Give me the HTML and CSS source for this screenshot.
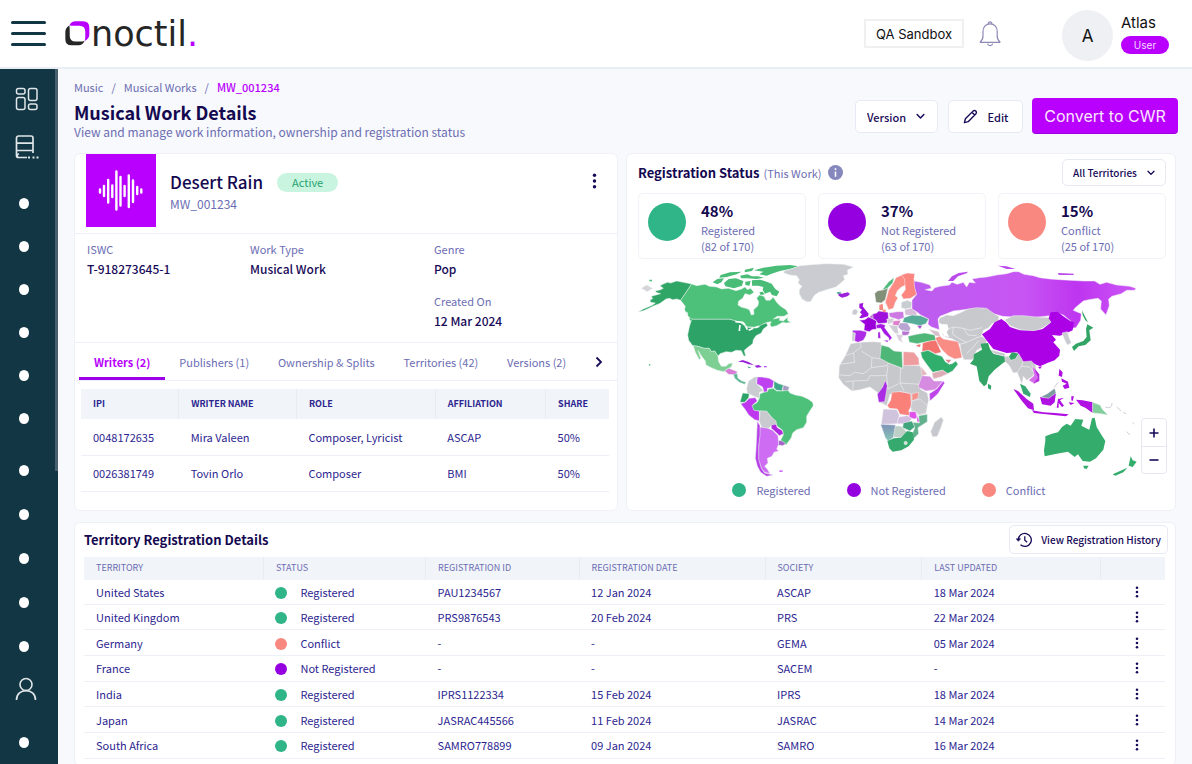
FILE: index.html
```html
<!DOCTYPE html>
<html lang="en">
<head>
<meta charset="utf-8">
<meta name="viewport" content="width=device-width, initial-scale=1">
<title>Musical Work Details</title>
<link rel="stylesheet" href="styles.css">
</head>
<body>
<svg width="0" height="0" class="sprite" aria-hidden="true">
  <symbol id="kebab" viewBox="0 0 4 14"><circle cx="2" cy="2" r="1.5"/><circle cx="2" cy="7" r="1.5"/><circle cx="2" cy="12" r="1.5"/></symbol>
  <symbol id="chev" viewBox="0 0 8 6"><path d="M1 1.2 4 4.4 7 1.2" fill="none" stroke="currentColor" stroke-width="1.3" stroke-linecap="round" stroke-linejoin="round"/></symbol>
</svg>
<header class="topbar">
  <button class="menu-btn" aria-label="Menu"><span></span><span></span><span></span></button>
  <a class="logo" href="#">
    <svg viewBox="195 62 74 74" width="25" height="25" aria-hidden="true">
      <path fill="#262626" d="M208 75 Q196 82 196 94 V116 Q196 134 214 134 H236 Q246 134 253 121 Q246 123 238 123 H226 Q209 123 209 106 V90 Q209 82 208 75Z"/>
      <path fill="#b900ff" d="M208 75 Q214 63 226 63 H248 Q267 63 267 82 V102 Q267 114 253 121 Q255 116 255 108 V94 Q255 76 238 76 H224 Q214 76 208 75Z"/>
    </svg>
    <span class="wordmark">noctil<span class="logo-dot">.</span></span>
  </a>
  <div class="top-right">
    <button class="sandbox">QA Sandbox</button>
    <button class="bell" aria-label="Notifications">
      <svg viewBox="0 0 22 26" width="22" height="26" fill="none" stroke="#8d89b5" stroke-width="1.2"><path d="M9.3 2.6a1.8 1.8 0 0 1 3.6 0M.8 21.4h20.6M1 21.2c2-1.600 3-3.200 3-6.200V10.500C4 6 7 2.800 11.100 2.800S18.200 6 18.200 10.500V15c0 3 1 4.600 3 6.200M8.500 22.600a2.700 2.700 0 0 0 5.200 0"/></svg>
    </button>
    <span class="avatar">A</span>
    <div class="who"><span class="who-name">Atlas</span><span class="who-role">User</span></div>
  </div>
</header>
<div class="shell">
  <nav class="side" aria-label="Main">
    <ul class="icons">
      <li><a href="#" aria-label="Dashboard"><svg viewBox="0 0 24 24" width="24" height="24" fill="none" stroke="#dfe5e8" stroke-width="1.500"><rect x="1.500" y="1.500" width="8.500" height="5.500" rx="2"/><rect x="13.500" y="1.500" width="8.500" height="12" rx="2"/><rect x="1.500" y="10.500" width="8.500" height="12" rx="2"/><rect x="13.500" y="17" width="8.500" height="5.500" rx="2"/></svg></a></li>
      <li><a href="#" aria-label="Catalogue"><svg viewBox="0 0 24 24" width="24" height="24" fill="none" stroke="#dfe5e8" stroke-width="1.700"><path d="M12 22.500H3.500a2 2 0 0 1-2-2V3a2 2 0 0 1 2-2H16a2 2 0 0 1 2 2v15M1.500 8.200H18M1.500 15.500H18M4 22.500c-2.500 0-2.500-3.500 0-3.500"/><path d="M13 22.500h2M17.500 22.500h2M21.500 22.500h2" stroke-width="2.200"/></svg></a></li>
    </ul>
    <ul class="dots">
      <li><a href="#" aria-label="Section 1"><i></i></a></li><li><a href="#" aria-label="Section 2"><i></i></a></li><li><a href="#" aria-label="Section 3"><i></i></a></li><li><a href="#" aria-label="Section 4"><i></i></a></li><li><a href="#" aria-label="Section 5"><i></i></a></li><li><a href="#" aria-label="Section 6"><i></i></a></li>
    </ul>
    <ul class="dots lower">
      <li><a href="#" aria-label="Section 7"><i></i></a></li><li><a href="#" aria-label="Section 8"><i></i></a></li><li><a href="#" aria-label="Section 9"><i></i></a></li><li><a href="#" aria-label="Section 10"><i></i></a></li><li><a href="#" aria-label="Section 11"><i></i></a></li>
      <li><a href="#" aria-label="Profile"><svg viewBox="0 0 22 24" width="22" height="24" fill="none" stroke="#dfe5e8" stroke-width="1.600"><circle cx="11" cy="7.500" r="6"/><path d="M1.500 23c0-12.500 19-12.500 19 0"/></svg></a></li>
    </ul>
    <ul class="dots last"><li><a href="#" aria-label="Section 12"><i></i></a></li></ul>
    <span class="thumb"></span>
  </nav>
  <main class="main">
    <div class="page-head">
      <div>
        <nav class="crumbs" aria-label="Breadcrumb"><a href="#">Music</a><span>/</span><a href="#">Musical Works</a><span>/</span><a href="#" class="here">MW_001234</a></nav>
        <h1>Musical Work Details</h1>
        <p class="sub">View and manage work information, ownership and registration status</p>
      </div>
      <div class="actions">
        <label class="pick version"><select aria-label="Version"><option>Version</option></select><svg width="9" height="7"><use href="#chev"/></svg></label>
        <button class="btn edit"><svg viewBox="0 0 16 16" width="15" height="15" fill="none" stroke="currentColor" stroke-width="1.500" stroke-linejoin="round"><path d="M1.500 14.500 2.500 10.500 11 2q1.300-1.100 2.600.2T13.800 5L5.500 13.500Z M9.500 3.500l3 3"/></svg>Edit</button>
        <button class="convert">Convert to CWR</button>
      </div>
    </div>
    <div class="cards">
      <section class="card work">
        <div class="work-head">
          <div class="art"><svg viewBox="0 0 46 42" width="46" height="42" stroke="#fff" stroke-width="2.400" stroke-linecap="round"><path d="M2 19.500v3M6 16v10M10.200 10v22.500M14.300 15.500v11.500M18.400 1.500v38M22.500 7v28.500M26.600 16v10M30.800 5.500v31.500M35 10.500v21.500M39.200 17v7M43.300 19.500v3"/></svg></div>
          <div class="ident"><div class="ident-row"><h2>Desert Rain</h2><span class="badge">Active</span></div><span class="code">MW_001234</span></div>
          <button class="kebab" aria-label="More"><svg width="5" height="16"><use href="#kebab"/></svg></button>
        </div>
        <dl class="facts">
          <div><dt>ISWC</dt><dd>T-918273645-1</dd></div>
          <div><dt>Work Type</dt><dd>Musical Work</dd></div>
          <div><dt>Genre</dt><dd>Pop</dd></div>
          <div class="created"><dt>Created On</dt><dd>12 Mar 2024</dd></div>
        </dl>
        <div class="tabs" role="tablist">
          <button role="tab" aria-selected="true" class="tab on">Writers (2)</button><button role="tab" class="tab">Publishers (1)</button><button role="tab" class="tab">Ownership &amp; Splits</button><button role="tab" class="tab">Territories (42)</button><button role="tab" class="tab">Versions (2)</button>
          <button class="next" aria-label="More tabs"><svg viewBox="0 0 8 12" width="8" height="12" fill="none" stroke="currentColor" stroke-width="1.800"><path d="M1.500 1.500 6 6 1.500 10.500"/></svg></button>
        </div>
        <div class="writers-wrap">
        <table class="writers">
          <colgroup><col class="w1"><col class="w2"><col class="w3"><col class="w4"><col class="w5"></colgroup>
          <thead><tr><th>IPI</th><th>WRITER NAME</th><th>ROLE</th><th>AFFILIATION</th><th>SHARE</th></tr></thead>
          <tbody><tr><td>0048172635</td><td>Mira Valeen</td><td>Composer, Lyricist</td><td>ASCAP</td><td>50%</td></tr><tr><td>0026381749</td><td>Tovin Orlo</td><td>Composer</td><td>BMI</td><td>50%</td></tr></tbody>
        </table>
        </div>
      </section>
      <section class="card status">
        <div class="status-head">
          <h2>Registration Status</h2><span class="hint">(This Work)</span>
          <svg viewBox="0 0 14 14" width="15" height="15" aria-hidden="true"><circle cx="7" cy="7" r="7" fill="#8587bd"/><path d="M7 3v1.600M7 6v5" stroke="#fff" stroke-width="1.500"/></svg>
          <label class="pick terr"><select aria-label="Territory filter"><option>All Territories</option></select><svg width="8" height="6"><use href="#chev"/></svg></label>
        </div>
        <div class="stats">
          <div class="stat"><i class="green"></i><div><b>48%</b><span>Registered</span><span>(82 of 170)</span></div></div>
          <div class="stat"><i class="purple"></i><div><b>37%</b><span>Not Registered</span><span>(63 of 170)</span></div></div>
          <div class="stat"><i class="coral"></i><div><b>15%</b><span>Conflict</span><span>(25 of 170)</span></div></div>
        </div>
        <div class="map">
          <svg class="world" viewBox="638 261 528 219" role="img" aria-label="World map of registration status" stroke-linejoin="round">
            <defs>
              <linearGradient id="ru" x1="0" x2="1"><stop offset="0" stop-color="#bb5eef"/><stop offset=".5" stop-color="#c755f3"/><stop offset=".74" stop-color="#be35f0"/><stop offset="1" stop-color="#cb56f5"/></linearGradient>
              <linearGradient id="nam" x1="0" x2="0" y1="0" y2="1"><stop offset="0" stop-color="#7f93b8"/><stop offset="1" stop-color="#86c5b5"/></linearGradient>
            </defs>
            <g transform="translate(630 260) scale(.3333)" stroke="#e9f3ee" stroke-width="1.500">
              <path fill="#2fa566" d="M90 80 98 76 112 70 122 72 140 66 160 70 185 75 152 124 140 120 128 122 118 118 108 120 100 126 88 134 72 140 52 150 40 155 25 158 40 150 55 144 68 138 76 132 62 130 60 123 68 119 64 112 78 108 92 104 78 100 76 96 92 92 100 88Z"/>
              <path fill="#4dc07a" d="M185 75 200 80 225 76 238 82 260 84 275 90 295 88 318 95 335 90 345 84 352 92 362 88 372 100 360 108 345 104 338 118 326 126 324 138 335 145 348 148 358 152 364 168 372 166 371 152 384 140 386 128 380 118 388 108 402 112 408 124 420 124 430 115 440 130 452 142 468 152 475 164 462 172 442 172 430 180 450 176 448 184 460 186 474 174 472 184 482 190 470 192 458 190 440 200 424 204 420 196 424 188 412 190 402 194 385 205 350 203 335 192 300 181 186 181 174 172 172 160 164 152 166 142 158 132 152 124Z"/>
              <g fill="#49bd78" stroke="none"><path d="M372 34 400 26 440 20 480 18 505 22 480 30 450 36 425 44 410 50 388 46 400 38Z"/><path d="M272 48 300 40 335 38 320 46 290 54 268 56Z"/><path d="M345 32 372 26 366 36 344 40Z"/><path d="M248 70 262 60 282 58 274 70 262 76Z"/><path d="M282 72 296 60 318 58 340 66 336 80 312 88 286 82Z"/><path d="M330 50 352 46 366 52 384 52 402 56 380 60 352 58 334 58Z"/><path d="M346 68 362 66 358 80 346 78Z"/><path d="M366 64 390 62 410 68 425 74 436 90 448 98 440 112 426 108 420 98 405 104 398 92 400 84 384 80 366 80Z"/><path d="M388 100 398 98 404 106 392 108Z"/><path d="M178 176 190 182 188 188 180 184ZM166 146 171 150 170 162 166 156ZM58 62h8v5h-8ZM56 314l6 3-3 5Z"/></g>
              <path fill="#2da367" d="M186 181H300L330 190 350 205 375 207 398 196 410 192 413 200 400 210 394 222 378 230 370 242 368 254 352 266 343 274 347 292 341 290 334 275 318 274 305 280 288 278 270 284 264 292 254 276 244 278 238 268 222 268 204 262 188 260 176 244 173 228 178 204 182 190Z"/>
              <path d="M316 188 338 190 346 198M330 198 328 216M346 200 352 212M356 214 370 208M376 206 388 202" fill="none" stroke="#fff" stroke-width="5"/>
              <path fill="#7ecf94" d="M190 260 204 262 222 268 238 268 244 278 254 276 264 292 266 308 274 322 288 322 296 314 308 312 304 324 292 330 282 338 262 334 244 326 228 318 226 306 214 290 204 274 212 298 208 302 196 280Z"/>
              <path fill="#d67bd6" d="M284 336 296 328 312 334 322 338 318 348 296 346Z"/><path fill="#5db893" d="M310 346 322 344 324 358 336 366 348 370 344 376 328 370 314 358Z"/>
              <path fill="#9b22db" stroke="none" d="M324 308 338 303 354 308 372 318 356 316 340 310ZM374 320 386 318 396 324 380 326ZM402 322h8v3h-8Z"/><path fill="#49a78b" stroke="none" d="M352 322 364 326 356 328Z"/>
              <path fill="#cbccd1" d="M356 366 374 354 384 354 378 372 390 384 400 396 388 400 388 418 372 412 352 402 350 388Z"/>
              <path fill="#bf42f1" d="M382 354 396 354 418 358 432 366 428 386 412 388 412 398 402 400 398 384 380 374Z"/>
              <path fill="#3da988" d="M432 366 446 374 460 378 456 396 440 394 432 386Z"/><path fill="#a69ac0" d="M460 378 478 384 474 396 458 396Z"/>
              <path fill="#2da367" d="M338 402 358 404 356 416 344 430 330 430Z"/>
              <path fill="#bf38f0" d="M332 434 346 430 358 418 376 416 382 426 368 438 372 452 388 456 388 486 374 482 356 468 346 452Z"/>
              <path fill="#4dc07a" d="M388 418 390 404 402 400 412 398 416 390 430 388 440 396 458 396 474 394 480 402 496 408 516 412 534 420 548 430 550 440 538 458 530 472 530 490 520 506 500 512 488 522 484 536 468 558 452 544 460 528 458 514 442 502 436 490 424 474 410 458 390 456 372 454 366 440 382 430Z"/>
              <path fill="#c9cad0" d="M390 456 410 456 424 474 438 486 440 500 424 500 416 508 396 506 388 488Z"/>
              <path fill="#af27df" d="M424 498 438 496 442 506 456 514 460 524 448 530 436 518 424 508Z"/><path fill="#a664c9" d="M446 544 456 546 468 554 458 560 444 558Z"/>
              <path fill="#ce6df3" d="M390 504 414 508 428 514 444 530 446 556 440 570 446 576 432 580 426 592 412 598 414 612 404 622 412 630 420 644 404 640 394 628 384 600 386 560 388 530Z"/>
              <path fill="#b842e8" d="M382 486 390 500 390 530 386 560 386 600 394 628 404 642 430 648 410 652 392 640 382 622 376 598 378 570 380 530Z"/><path fill="#cf6ef3" stroke="none" d="M448 634h10v5h-10Z"/>
              <path fill="#cbccd1" d="M462 36 490 28 510 20 545 17 590 14 640 16 670 24 652 34 654 46 640 50 644 62 632 72 618 84 590 92 566 100 552 110 542 128 530 128 516 120 508 104 508 92 516 82 504 72 508 62 500 50 480 48 462 42Z"/>
              <path fill="#d6d6da" d="M34 88 50 78 68 88 52 98Z"/>
            </g>
            <g transform="translate(820 260) scale(.3333)" stroke="#f3f1f6" stroke-width="1.500">
              <path fill="#9d22db" stroke="none" d="M54 102 66 104 84 100 90 106 82 112 66 116 56 110Z"/><path fill="#52ad93" stroke="none" d="M50 100 62 98 62 104 52 104Z"/>
              <path fill="#9d12dd" stroke="none" d="M118 134 130 132 128 142 136 152 146 164 144 172 124 178 118 176 126 166 120 160 126 152 118 146Z"/><path fill="#cacbd0" d="M98 154 108 150 114 158 108 168 96 166Z"/>
              <path fill="#c9cad0" d="M97 218 106 220 104 246 96 246Z"/><path fill="#ad2ae8" d="M98 214 120 214 140 218 138 230 130 244 114 250 104 246 106 222 98 220Z"/>
              <path fill="#9b00db" d="M118 184 134 182 146 174 156 178 170 186 168 196 170 210 156 212 148 218 132 214 134 196Z"/>
              <path fill="#9f10dc" d="M156 166 170 162 176 156 204 160 206 180 200 192 174 194 168 184 156 178Z"/><path fill="#b86bd0" d="M150 172 158 166 160 178 150 176Z"/>
              <path fill="#a515e4" d="M168 198 182 194 196 198 194 206 204 220 216 236 208 246 206 236 192 224 182 208 170 208ZM190 244 206 244 202 250ZM174 220 180 218 182 238 174 238Z"/>
              <path fill="#f78a80" stroke="none" d="M178 138 188 134 190 152 178 154ZM188 152 198 152 196 160 188 158Z"/>
              <path fill="#808f76" d="M164 104 172 96 190 92 204 86 196 122 184 132 168 130Z"/><path fill="#4dba7c" d="M186 94 206 68 222 56 218 72 202 88Z"/>
              <path fill="#fb8b83" d="M206 94 220 72 228 56 246 48 258 54 258 78 244 84 232 96 226 110 234 116 226 130 220 148 206 152 196 130Z"/>
              <path fill="#fb857f" d="M244 48 262 42 284 44 282 60 290 106 272 118 250 120 244 108 256 92 254 60Z"/>
              <path fill="#c8cdd0" d="M244 130 262 124 276 130 274 146 256 150 244 146Z"/><path fill="#d4bed8" d="M254 152 274 148 290 160 290 170 256 168Z"/>
              <path fill="#cc79e4" d="M206 162 232 158 250 158 252 176 236 182 210 174Z"/><path fill="#d3d0d8" d="M200 180 222 178 220 190 204 196Z"/><path fill="#e07ccc" d="M220 186 242 184 236 200 218 198Z"/>
              <path fill="#57ac99" d="M252 176 276 168 302 170 326 180 318 194 300 200 276 194 248 190Z"/><path fill="#a94fd0" stroke="none" d="M292 200 306 200 300 210Z"/>
              <path fill="#b9a5d2" d="M240 192 262 192 272 208 266 218 244 214 234 204Z"/><path fill="#cfcdd4" d="M206 198 232 200 236 224 224 222Z"/><path fill="#b673d4" d="M246 216 270 218 264 228 246 230Z"/><path fill="#dad1dc" d="M228 226 250 228 244 240 250 252 236 244Z"/>
              <path fill="#4eb777" d="M264 232 290 226 314 222 344 228 348 244 320 248 292 254 268 250Z"/>
              <path fill="url(#ru)" d="M282 66 304 70 330 78 334 88 316 92 336 96 344 86 360 82 388 78 396 70 412 76 430 70 440 84 448 70 466 72 456 60 478 56 500 54 530 48 560 44 580 38 596 38 612 46 640 50 660 56 690 60 720 62 750 64 790 66 824 66 840 76 860 70 890 78 930 82 948 88 944 94 920 94 904 104 876 112 866 120 868 140 858 168 842 150 844 126 834 118 806 122 790 126 766 146 760 154 784 164 782 184 768 206 750 208 752 186 730 168 702 160 690 170 640 176 610 172 580 174 548 172 520 164 490 148 450 150 400 156 360 172 354 180 358 212 334 204 324 196 326 180 302 168 290 158 276 150 276 124 290 106 284 86Z"/>
              <path fill="#bc4bec" stroke="none" d="M384 66 396 52 416 42 444 38 440 43 414 52 400 66ZM534 20 560 22 586 30 560 30ZM714 42 762 44 760 48 716 48Z"/>
              <path fill="#c8c9cd" d="M358 178 380 168 400 170 424 160 444 150 470 146 500 148 522 164 536 172 536 186 516 194 506 206 490 214 484 230 500 244 498 258 470 274 458 302 432 302 424 284 420 256 398 240 376 234 366 226 384 210 368 198 356 190Z"/>
              <path fill="none" stroke="#f1f1f4" stroke-width="2" d="M384 210 400 204 430 208 450 214 486 206M400 204 398 226 420 240 440 250M430 208 444 228 470 230M420 256 440 250 470 236 486 232M440 284 462 262 476 244"/>
              <path fill="#fff" stroke="none" d="M364 196 382 196 386 210 380 220 388 234 372 232 366 216Z"/>
              <path fill="#d5c0cc" d="M326 210 356 218 362 234 346 230Z"/>
              <path fill="#f98d86" d="M346 236 360 232 370 240 392 244 414 248 420 268 426 296 404 300 384 290 366 272 352 252Z"/>
              <path fill="#f2736e" d="M308 252 330 246 348 244 356 262 364 280 346 284 326 274 306 278Z"/><path fill="#e77a70" stroke="none" d="M290 258 302 256 300 264 290 262Z"/>
              <path fill="#2fae6c" d="M302 280 324 274 346 286 366 292 376 308 388 316 396 314 408 306 414 316 398 336 382 344 368 334 338 340 320 316 306 296Z"/>
              <path fill="#dcadb5" d="M336 342 368 334 384 344 362 354 340 360Z"/><path fill="#d9858d" stroke="none" d="M376 302 394 302 386 312Z"/>
              <path fill="#c7c8cc" d="M92 254 120 250 160 248 182 250 186 266 182 296 206 312 248 328 250 318 300 320 312 350 330 370 300 390 322 402 326 424 316 462 300 470 274 456 272 404 240 398 210 406 200 440 180 430 172 400 150 384 120 392 96 396 70 376 56 356 58 320 76 290Z"/>
              <path fill="none" stroke="#edeef0" stroke-width="2" d="M76 290 100 282 124 264 120 250M100 282 104 310 58 316M124 276 156 296 182 300M104 340 130 344 154 326 156 296M154 326 200 320 206 312M144 364 150 350 200 350 204 320M58 348 90 350 104 340M98 394 100 366 144 364M200 350 204 390M242 326 240 372 252 396M204 390 236 374M240 372 300 376 312 350M76 368 100 366"/>
              <path fill="#4eb777" d="M184 258 206 264 222 276 246 278 248 328 206 312 180 298Z"/>
              <path fill="#ee9c9d" d="M250 278 282 280 296 298 298 318 250 320Z"/>
              <path fill="#e5b6be" d="M302 322 322 346 306 350Z"/><path fill="#d48be0" d="M306 350 330 352 342 366 370 366 346 392 318 396 294 384Z"/><path fill="#bd45ea" d="M370 366 374 372 354 404 330 426 328 404 350 390Z"/>
              <path fill="#aa2de3" d="M196 364 202 380 198 406 194 428 176 430 172 406 188 384Z"/>
              <path fill="#f98179" d="M216 400 240 398 272 404 274 440 266 456 272 470 240 466 232 450 208 448 202 440 212 424Z"/><path fill="#f3938c" d="M276 404 296 400 294 418 276 426Z"/>
              <path fill="#ccccd0" d="M276 426 300 420 322 440 318 464 296 466 272 448Z"/>
              <path fill="#cfc4dc" d="M190 450 230 452 238 468 232 494 184 496Z"/><path fill="#d2bcdf" d="M236 474 262 470 276 478 264 494 232 494Z"/>
              <path fill="#df51ea" d="M268 458 288 458 294 476 282 480 268 474ZM288 460 300 488 292 490Z"/>
              <path fill="#61b28c" d="M296 470 322 466 322 488 294 506 296 524 280 540 274 530 284 508 278 490 298 492Z"/><path fill="#40a57c" d="M250 492 276 486 284 504 270 516 248 506Z"/><path fill="#bdcfc7" d="M222 500 244 502 262 520 240 536 220 534Z"/>
              <path fill="url(#nam)" d="M182 496 226 498 220 536 204 546 196 536Z"/>
              <path fill="#35a96e" stroke="none" d="M202 546 222 538 242 536 262 516 278 520 282 542 266 562 244 574 218 578 208 568Z"/><circle cx="257" cy="552" r="5" fill="#cfe5d9"/>
              <path fill="#c7c8ce" d="M364 474 370 484 362 508 352 532 338 534 332 518 344 490Z"/>
            </g>
            <g transform="translate(960 260) scale(.3333)" stroke="#f3f1f6" stroke-width="1.500">
              <path fill="#c8cacd" d="M134 182 160 170 190 170 230 174 270 176 274 190 246 208 222 216 180 212 150 200Z"/>
              <path fill="#ac00e6" stroke="none" d="M66 226 90 210 104 190 124 180 138 190 150 204 180 214 222 216 248 210 274 190 266 178 272 160 292 158 310 172 334 188 342 190 338 214 320 222 300 230 276 228 288 242 280 250 300 272 298 290 284 304 262 312 240 322 222 314 206 318 184 306 172 280 140 282 100 270 84 250Z"/>
              <path fill="#ac00e6" stroke="none" d="M234 324 246 322 240 330Z"/>
              <path fill="#c9cacf" d="M306 222 322 218 328 238 334 252 322 258 314 242Z"/>
              <path fill="#31a466" stroke="none" d="M366 154 374 170 384 190 376 184 368 168ZM382 196 400 206 388 214 392 244 376 258 356 262 342 276 336 264 348 254 370 246 380 234 378 210Z"/>
              <path fill="#31a466" stroke="none" d="M62 254 84 252 90 270 100 284 134 292 140 302 156 280 176 284 164 306 150 304 132 310 104 332 86 352 80 376 72 382 58 366 50 322 30 314 40 302 42 286 66 272ZM84 374 94 380 92 392 84 388Z"/>
              <path fill="#c8c9cd" d="M92 272 136 284 134 292 102 284Z"/>
              <path fill="#c8c9cd" d="M134 292 146 292 152 304 166 300 176 284 190 308 214 306 228 320 226 336 218 352 200 364 190 352 186 376 178 356 172 340 160 342 148 320 136 308Z"/>
              <path fill="none" stroke="#eeeef1" stroke-width="2" d="M190 308 184 322 172 340M184 322 208 324 222 340"/>
              <path fill="#d66cec" d="M216 318 230 338 236 356 224 374 206 364 222 350Z"/><path fill="#b32bdd" stroke="none" d="M222 326 238 346 238 366 220 374 234 356Z"/>
              <path fill="#37a871" stroke="none" d="M180 374 196 382 212 404 210 414 190 404Z"/>
              <path fill="#b010e2" stroke="none" d="M160 390 174 396 200 420 220 434 222 454 204 448 184 424ZM216 454 250 460 286 462 326 466 318 472 280 468 222 462ZM240 414 264 416 288 402 284 430 272 440 246 436Z"/>
              <path fill="#799ba0" d="M242 414 262 404 284 388 288 402 266 418Z"/>
              <path fill="#b010e2" stroke="none" d="M294 420 312 416 300 424 312 440 306 444 296 432 296 446 290 446ZM334 412 342 412 338 426 334 424ZM326 430 344 432 332 438ZM348 422 368 424 398 430 398 462 376 446 362 440ZM298 330 308 340 306 354 296 350ZM304 358 324 368 328 386 314 390 308 380 320 374 306 368Z"/>
              <path fill="#82cd9c" d="M398 430 420 438 428 452 444 468 422 464 398 462Z"/>
              <path fill="none" stroke="#c4c6ce" stroke-width="2.500" d="M436 444Q456 452 456 432M470 444 484 456M490 460 498 464M518 490l4 6M500 518l10 10M282 386 294 370"/>
              <path fill="#34ac6c" stroke="none" d="M256 546 256 532 276 524 294 520 306 504 320 494 332 500 346 480 370 482 364 500 388 512 396 478 404 476 410 504 426 530 436 546 430 572 408 598 390 608 368 606 354 586 344 594 324 578 290 584 254 592 252 574ZM370 620 386 620 380 630 372 628ZM512 592 518 604 530 608 518 624 506 620ZM458 646 480 636 502 626 490 640 466 650Z"/>
            </g>
          </svg>
          <div class="zoom"><button aria-label="Zoom in"><svg viewBox="0 0 10 10" width="10" height="10"><path d="M5 .5v9M.5 5h9"/></svg></button><button aria-label="Zoom out"><svg viewBox="0 0 10 10" width="10" height="10"><path d="M.5 5h9"/></svg></button></div>
        </div>
        <div class="legend"><span><i class="green"></i>Registered</span><span><i class="purple"></i>Not Registered</span><span><i class="coral"></i>Conflict</span></div>
      </section>
    </div>
    <section class="card details">
      <div class="details-head"><h2>Territory Registration Details</h2>
        <button class="btn history"><svg viewBox="0 0 16 16" width="16" height="16" fill="none" stroke="currentColor" stroke-width="1.300"><path d="M2.300 8A6.500 6.500 0 1 1 4.500 12.800M8.800 4.200v4l2.400 2"/><path d="M.3 6.800 2.300 9.300 4.600 6.800Z" fill="currentColor" stroke-width=".6"/></svg>View Registration History</button>
      </div>
      <table class="terrs">
        <colgroup><col class="c1"><col class="c2"><col class="c3"><col class="c4"><col class="c5"><col class="c6"><col class="c7"></colgroup>
        <thead><tr><th>TERRITORY</th><th>STATUS</th><th>REGISTRATION ID</th><th>REGISTRATION DATE</th><th>SOCIETY</th><th>LAST UPDATED</th><th></th></tr></thead>
        <tbody>
          <tr><td>United States</td><td><i class="green"></i>Registered</td><td>PAU1234567</td><td>12 Jan 2024</td><td>ASCAP</td><td>18 Mar 2024</td><td><button class="row-menu" aria-label="More"><svg width="4" height="12"><use href="#kebab"/></svg></button></td></tr>
          <tr><td>United Kingdom</td><td><i class="green"></i>Registered</td><td>PRS9876543</td><td>20 Feb 2024</td><td>PRS</td><td>22 Mar 2024</td><td><button class="row-menu" aria-label="More"><svg width="4" height="12"><use href="#kebab"/></svg></button></td></tr>
          <tr><td>Germany</td><td><i class="coral"></i>Conflict</td><td>-</td><td>-</td><td>GEMA</td><td>05 Mar 2024</td><td><button class="row-menu" aria-label="More"><svg width="4" height="12"><use href="#kebab"/></svg></button></td></tr>
          <tr><td>France</td><td><i class="purple"></i>Not Registered</td><td>-</td><td>-</td><td>SACEM</td><td>-</td><td><button class="row-menu" aria-label="More"><svg width="4" height="12"><use href="#kebab"/></svg></button></td></tr>
          <tr><td>India</td><td><i class="green"></i>Registered</td><td>IPRS1122334</td><td>15 Feb 2024</td><td>IPRS</td><td>18 Mar 2024</td><td><button class="row-menu" aria-label="More"><svg width="4" height="12"><use href="#kebab"/></svg></button></td></tr>
          <tr><td>Japan</td><td><i class="green"></i>Registered</td><td>JASRAC445566</td><td>11 Feb 2024</td><td>JASRAC</td><td>14 Mar 2024</td><td><button class="row-menu" aria-label="More"><svg width="4" height="12"><use href="#kebab"/></svg></button></td></tr>
          <tr><td>South Africa</td><td><i class="green"></i>Registered</td><td>SAMRO778899</td><td>09 Jan 2024</td><td>SAMRO</td><td>16 Mar 2024</td><td><button class="row-menu" aria-label="More"><svg width="4" height="12"><use href="#kebab"/></svg></button></td></tr>
        </tbody>
      </table>
    </section>
  </main>
</div>
</body>
</html>
```
FILE: styles.css
```css
:root {
  --ink: #180a58;
  --title: #140850;
  --text: #2c2590;
  --muted: #6c6db3;
  --line: #eef0f7;
  --magenta: #b900ff;
  --ui: "Noto Sans CJK SC", "Noto Sans", sans-serif;
}
* { box-sizing: border-box; }
body { margin: 0; min-height: 100vh; display: flex; flex-direction: column; background: #f7f9fc; color: var(--ink); font-family: var(--ui); font-size: 11px; line-height: 16px; }
button, select { font: inherit; color: inherit; border: 0; background: none; padding: 0; margin: 0; cursor: pointer; }
a { color: inherit; text-decoration: none; }
h1, h2, p, dl, dd, ul { margin: 0; padding: 0; }
ul { list-style: none; }
svg { display: block; flex: none; }
.sprite { position: absolute; }
.green { background: #2fb588; }
.purple { background: #9400e0; }
.coral { background: #f98880; }

.topbar { height: 69px; flex: none; display: flex; align-items: center; padding: 0 23px 0 11px; background: #fff; border-bottom: 2px solid #e9edf4; }
.menu-btn { display: flex; flex-direction: column; gap: 8px; width: 35px; }
.menu-btn span { height: 3px; border-radius: 2px; background: #133644; }
.logo { display: flex; align-items: center; margin-left: 19px; gap: 1px; }
.wordmark { font: 35px/36px "DejaVu Sans", sans-serif; color: #262626; }
.logo-dot { color: var(--magenta); }
.top-right { margin-left: auto; display: flex; align-items: center; font-family: Inter, sans-serif; color: #111; }
.sandbox { width: 100px; height: 29px; border: 2px solid #f0f0f1; font-size: 13px; }
.bell { margin: 0 61px 0 15px; }
.avatar { width: 51px; height: 51px; border-radius: 50%; background: #eff0f3; display: grid; place-items: center; font-size: 17px; margin-top: 4px; }
.who { display: flex; flex-direction: column; gap: 4px; margin-left: 8px; margin-top: 1px; }
.who-name { font-size: 15px; line-height: 18px; }
.who-role { width: 48px; height: 18px; border-radius: 9px; background: var(--magenta); color: #f6dcff; font-size: 10px; line-height: 18px; text-align: center; }

.shell { flex: 1; display: flex; }
.side { position: relative; width: 58px; flex: none; background: #133644; padding: 6px 0 0; }
.side li a { display: flex; align-items: center; height: 43px; padding-left: 19px; }
.side .icons a { height: 48px; padding-left: 15px; }
.side .icons { margin-bottom: 11px; }
.side .lower { margin-top: 8px; }
.side .lower a, .side .last a { height: 44px; }
.side .lower li:last-child a { padding-left: 15px; height: 42px; }
.side .last { margin-top: 10px; }
.side i { width: 10px; height: 11px; border-radius: 50%; background: #fff; }
.thumb { position: absolute; right: 0; top: 0; width: 3px; height: 402px; background: #48606d; }

.main { flex: 1; min-width: 0; padding: 9px 16px 0; }
.page-head { display: flex; justify-content: space-between; margin: 0 -2px 0 0; height: 75px; }
.crumbs { display: flex; gap: 8px; color: var(--muted); line-height: 18px; }
.crumbs .here { color: var(--magenta); font-weight: 500; }
h1 { font-size: 18px; line-height: 32px; font-weight: 700; color: var(--title); }
.sub { font-size: 12px; line-height: 8px; color: var(--muted); }
.actions { display: flex; gap: 9px; padding-top: 20px; align-items: flex-start; }
.btn, .pick { background: #fff; border: 1px solid #e7e9f4; border-radius: 5px; font-weight: 500; }
.btn { display: flex; align-items: center; justify-content: center; gap: 10px; }
.pick { display: grid; grid-template-columns: 1fr auto; align-items: center; }
.pick select { grid-area: 1 / 1 / 2 / 3; height: 100%; appearance: none; outline: none; font-weight: 500; }
.pick svg { grid-area: 1 / 2; pointer-events: none; }
.version { width: 83px; height: 33px; margin: 2px 1px 0 0; }
.version select { padding-left: 11px; }
.version svg { margin-right: 12px; }
.edit { width: 75px; height: 33px; margin-top: 2px; }
.convert { width: 146px; height: 36px; border-radius: 4px; background: var(--magenta); border-bottom: 1px solid #9900dd; color: #f9e6ff; font: 16px/34px Inter, sans-serif; }

.cards { display: grid; grid-template-columns: 544fr 550fr; gap: 8px; }
.card { background: #fff; border: 1px solid #eff1f7; border-radius: 6px; min-width: 0; }
.work-head { display: flex; height: 80px; padding-left: 11px; border-bottom: 1px solid var(--line); }
.art { width: 70px; height: 73px; background: var(--magenta); display: grid; place-items: center; }
.ident { margin: 16px 0 0 14px; }
.ident-row { display: flex; align-items: center; gap: 14px; }
.ident h2 { font-size: 17px; line-height: 24px; font-weight: 500; color: var(--title); }
.badge { width: 61px; border-radius: 10px; background: #c9f5e0; color: #25a26f; line-height: 19px; text-align: center; }
.code { display: block; color: var(--muted); font-size: 12px; line-height: 20px; }
.kebab { margin: 19px 20px 0 auto; align-self: flex-start; }
.facts { display: grid; grid-template-columns: 163fr 184fr 183fr; padding: 5px 0 0 12px; height: 109px; row-gap: 12px; align-content: start; border-bottom: 1px solid var(--line); }
.facts dt { color: var(--muted); line-height: 20px; }
.facts dd { font-size: 12px; line-height: 20px; font-weight: 500; }
.created { grid-column: 3; }
.tabs { display: flex; height: 38px; padding: 0 14px 0 4px; border-bottom: 1px solid var(--line); color: var(--muted); justify-content: space-between; }
.tab.on { color: var(--magenta); font-weight: 700; border-bottom: 3px solid #9d00e8; padding: 3px 15px 0; margin-right: -15px; }
.next { color: var(--ink); }
.writers-wrap { padding: 8px 8px 18px 6px; }
table { border-collapse: collapse; table-layout: fixed; width: 100%; color: var(--text); }
th { text-align: left; background: #f1f4f8; border-right: 1px solid #e9edf3; }
th:last-child { border-right: 0; }
td { border-bottom: 1px solid var(--line); }
th, td { padding: 0 0 0 12px; white-space: nowrap; }
.writers th { height: 30px; font-size: 9px; font-weight: 700; }
.writers td { height: 36px; }
.w1 { width: 18.500%; } .w2 { width: 22.300%; } .w3 { width: 26.300%; } .w4 { width: 20.900%; } .w5 { width: 12%; }

.status { padding: 0 9px 0 11px; }
.status-head { display: flex; align-items: center; padding-top: 4px; height: 33px; }
.status-head h2 { font-size: 13px; line-height: 20px; font-weight: 700; color: var(--title); }
.hint { color: var(--muted); margin: 0 6px 0 4px; }
.terr { margin-left: auto; width: 104px; height: 27px; font-size: 10px; }
.terr select { padding-left: 10px; }
.terr svg { margin-right: 10px; }
.stats { display: grid; grid-template-columns: repeat(3, 1fr); gap: 12px; margin-top: 6px; }
.stat { display: flex; height: 66px; padding: 9px 0 0 9px; gap: 15px; border: 1px solid #f2f3f8; border-radius: 5px; color: var(--muted); }
.stat i { width: 38px; height: 38px; border-radius: 50%; flex: none; }
.stat > div { margin-top: -3px; }
.stat b { font-size: 15px; color: var(--title); }
.stat b { display: block; line-height: 22px; }
.stat span { display: block; line-height: 16px; }
.map { position: relative; margin-top: 1px; }
.world { width: 100%; height: auto; }
.zoom { position: absolute; right: -1px; top: 158px; width: 26px; border: 1px solid #e6e7f2; border-radius: 4px; background: #fff; display: flex; flex-direction: column; }
.zoom button { height: 27px; display: grid; place-items: center; }
.zoom button + button { border-top: 1px solid #e6e7f2; }
.zoom path { stroke: var(--ink); stroke-width: 1.600px; }
.legend { display: flex; justify-content: center; gap: 36px; color: var(--muted); line-height: 20px; margin-right: 26px; padding-top: 1px; }
.legend span { display: flex; align-items: center; gap: 10px; }
.legend i { width: 14px; height: 14px; border-radius: 50%; }

.details { margin-top: 11px; padding: 0 10px 6px 9px; }
.details-head { display: flex; justify-content: space-between; align-items: center; height: 34px; margin-right: -3px; }
.details h2 { font-size: 13px; line-height: 20px; color: var(--title); }
.history { width: 159px; height: 29px; font-size: 10px; gap: 9px; }
.terrs { height: 202px; }
.terrs th { height: 23px; font-size: 9px; font-weight: 400; color: var(--muted); }
.terrs td i { display: inline-block; width: 12px; height: 12px; border-radius: 50%; margin-right: 13px; vertical-align: -2px; }
.row-menu { display: block; margin-left: 23px; }
.row-menu svg, .kebab svg { fill: var(--ink); }
.c1 { width: 16.600%; } .c2 { width: 15%; } .c3 { width: 14.200%; } .c4 { width: 17.200%; } .c5 { width: 14.500%; } .c6 { width: 16.500%; } .c7 { width: 6%; }
```
